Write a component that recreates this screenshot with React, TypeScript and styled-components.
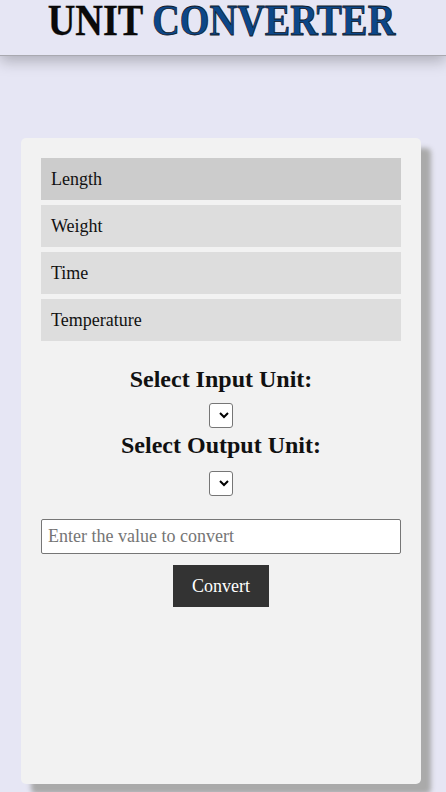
import React from "react";
import styled, { createGlobalStyle } from "styled-components";

const Global = createGlobalStyle`
  html, body { margin: 0; padding: 0; }
  body {
    background: #e6e6f4;
    font-family: "Liberation Serif", "Times New Roman", serif;
    color: #111;
    overflow: hidden;
  }
`;

const Page = styled.div`
  width: 442px;
  min-height: 792px;
  display: flex;
  flex-direction: column;
  align-items: center;
`;

const Header = styled.header`
  width: 446px;
  align-self: flex-start;
  height: 56px;
  box-sizing: border-box;
  border-bottom: 1px solid #a9a9b0;
  box-shadow: 0 5px 14px rgba(0, 0, 0, 0.25);
  display: flex;
  justify-content: center;
  overflow: hidden;
  position: relative;
  z-index: 1;
  background: #e6e6f4;
`;

const Title = styled.h1`
  margin: 0;
  margin-left: -4px;
  font-size: 45px;
  line-height: 40px;
  font-weight: 700;
  white-space: nowrap;
  transform: scaleX(0.85);
`;

const Word = styled.span<{ $blue?: boolean }>`
  color: ${(p) => (p.$blue ? "#0b4789" : "#0a0a0a")};
  -webkit-text-stroke: ${(p) => (p.$blue ? "0.8px #101828" : "0.3px #000")};
`;

const Card = styled.main`
  margin-top: 82px;
  width: 400px;
  height: 646px;
  box-sizing: border-box;
  padding: 20px;
  background: #f2f2f2;
  border-radius: 5px;
  box-shadow: 10px 10px 5px #aaaaaa;
  display: flex;
  flex-direction: column;
  align-items: center;
`;

const Tabs = styled.nav`
  width: 100%;
  display: flex;
  flex-direction: column;
  gap: 5px;
`;

const Tab = styled.div<{ $active?: boolean }>`
  height: 42px;
  box-sizing: border-box;
  padding: 0 10px;
  display: flex;
  align-items: center;
  background: ${(p) => (p.$active ? "#cccccc" : "#dddddd")};
  font-size: 18px;
  color: #111;
`;

const Heading = styled.h2<{ $mt: number }>`
  margin: ${(p) => p.$mt}px 0 0;
  font-size: 24px;
  line-height: 28px;
  font-weight: 700;
  color: #111;
`;

const Select = styled.select<{ $mt: number }>`
  margin-top: ${(p) => p.$mt}px;
  width: 24px;
  height: 25px;
  box-sizing: border-box;
  border: 1px solid #767676;
  border-radius: 3px;
  background: #fff;
  padding: 0;
`;

const Input = styled.input`
  margin-top: 23px;
  width: 100%;
  height: 35px;
  box-sizing: border-box;
  border: 1px solid #767676;
  border-radius: 2px;
  padding: 0 6px;
  font-family: "Liberation Serif", "Times New Roman", serif;
  font-size: 18px;
  background: #fff;
  &::placeholder { color: #757575; }
`;

const Button = styled.button`
  margin-top: 11px;
  width: 96px;
  height: 42px;
  border: none;
  background: #333333;
  color: #fff;
  font-family: "Liberation Serif", "Times New Roman", serif;
  font-size: 18px;
  cursor: pointer;
`;

export default function App() {
  return (
    <>
      <Global />
      <Page>
        <Header>
          <Title>
            <Word>UNIT</Word> <Word $blue>CONVERTER</Word>
          </Title>
        </Header>
        <Card>
          <Tabs>
            <Tab $active>Length</Tab>
            <Tab>Weight</Tab>
            <Tab>Time</Tab>
            <Tab>Temperature</Tab>
          </Tabs>
          <Heading $mt={24}>Select Input Unit:</Heading>
          <Select $mt={10} />
          <Heading $mt={3}>Select Output Unit:</Heading>
          <Select $mt={12} />
          <Input placeholder="Enter the value to convert" />
          <Button>Convert</Button>
        </Card>
      </Page>
    </>
  );
}
